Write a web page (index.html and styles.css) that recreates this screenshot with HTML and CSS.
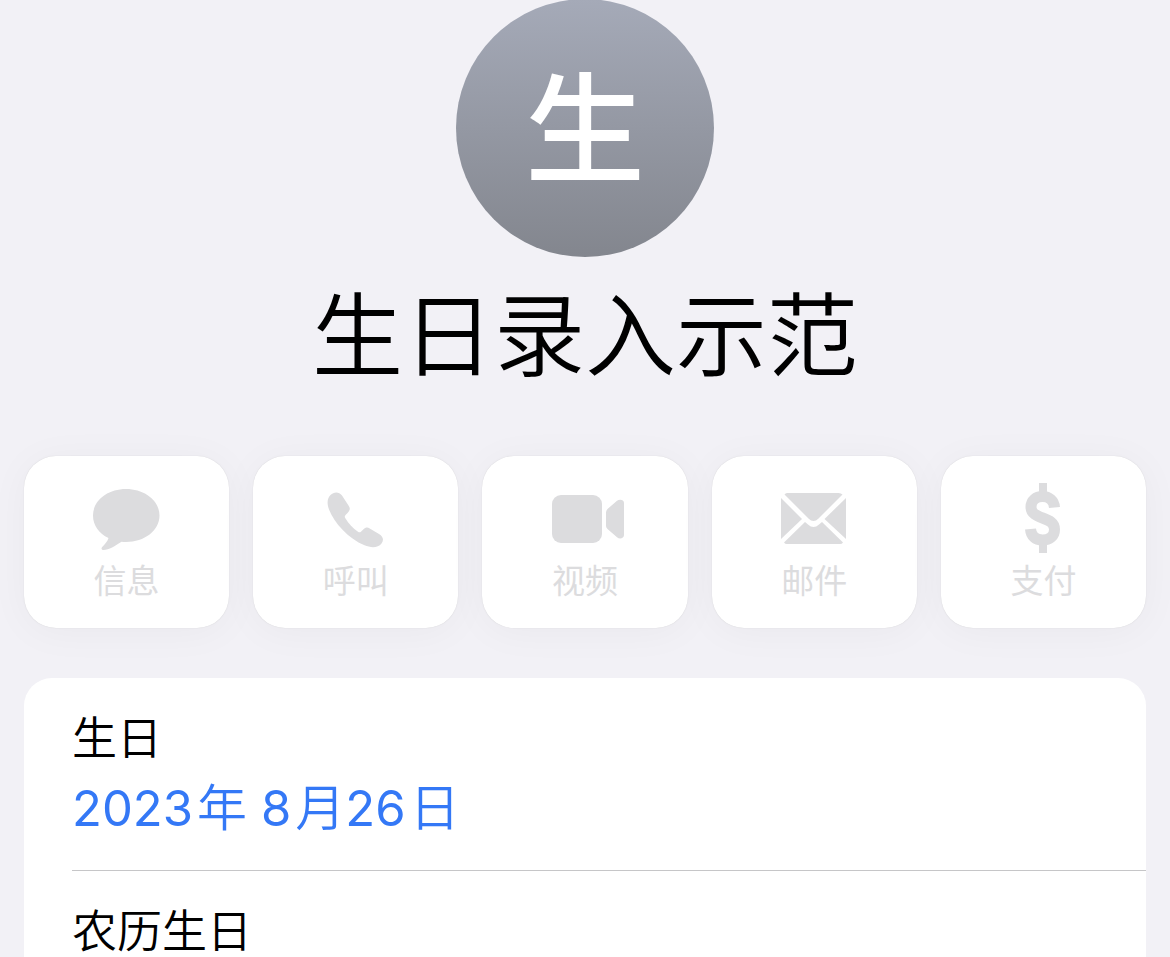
FILE: index.html
```html
<!DOCTYPE html>
<html lang="zh-CN">
<head>
    <meta charset="UTF-8">
    <meta name="viewport" content="width=device-width, initial-scale=1.0">
    <title>生日录入示范</title>
    <link rel="stylesheet" href="styles.css">
</head>
<body>
    <header class="profile">
        <div class="avatar">生</div>
        <h1>生日录入示范</h1>
    </header>

    <div class="actions">
        <button class="action" type="button" disabled>
            <svg viewBox="0 0 80 72" aria-hidden="true">
                <path d="M39 6C57.500 6 72.500 17.500 72.500 32.500S57.500 59 39 59c-1.500 0-3-.1-4.500-.3C28 63 22 67 16.500 67c-2 0-2.600-1.600-1.300-3 2-2.400 5.300-5 6.300-9C12 50.500 6 42.500 6 32.500 6 17.500 20.500 6 39 6z"/>
            </svg>
            <span>信息</span>
        </button>
        <button class="action" type="button" disabled>
            <svg viewBox="0 0 80 72" aria-hidden="true">
                <path d="M14.500 12C18 8.500 23 8.500 26 12.500L32.500 22.500C34.500 25.500 34 27 32 29.500L29.500 32C28.500 33.300 28.500 34 29.500 35.500C32.500 40.500 37 45.500 42 48.800C43.200 49.600 44 49.600 45.200 48.500L47.500 46.300C49.500 44.300 51.500 44 53.700 45.400L63 51C67.500 54 68 57 65.500 60.500C62 65 55 65 48.500 62.300C32.500 55.500 18.500 40.500 13 26.500C10.500 20 11.500 15 14.500 12z"/>
            </svg>
            <span>呼叫</span>
        </button>
        <button class="action" type="button" disabled>
            <svg viewBox="0 0 80 72" aria-hidden="true">
                <rect x="7" y="12" width="50" height="48" rx="9"/>
                <path d="M61 29.500Q61 27.500 62.500 26L72 17.800C74.500 15.800 79 16.500 79 20V52C79 55.500 74.500 56.500 72 54.300L62.500 46Q61 44.700 61 43z"/>
            </svg>
            <span>视频</span>
        </button>
        <button class="action" type="button" disabled>
            <svg viewBox="0 0 80 72" aria-hidden="true">
                <path d="M13 10H64.500Q67 10 68.500 11.500L44.500 35.500Q39.500 40.500 34.500 35.500L10.500 11.500Q11.500 10 13 10z"/>
                <path d="M7 15L28 36 7 56z"/>
                <path d="M72 15V56L50.500 36z"/>
                <path d="M31 39L34 41.500Q39.500 46.500 45 41.500L48 39 69 59.500Q68 61 66 61H13Q11 61 10 59.500z"/>
            </svg>
            <span>邮件</span>
        </button>
        <button class="action" type="button" disabled>
            <svg viewBox="0 0 80 72" aria-hidden="true">
                <path class="stroke" d="M51.500 24.500C51 17.500 46 13.500 39.500 13.500S28 17.500 28 24C28 37.500 51.500 32.500 51.500 46.500C51.500 53.500 46.500 57 39.500 57S28 53 27.500 46"/>
                <path d="M36 0h8v10h-8zM36 60h8v10h-8z"/>
            </svg>
            <span>支付</span>
        </button>
    </div>

    <dl class="card">
        <div class="row">
            <dt>生日</dt>
            <dd><a href="#"><span class="num">2023</span>年 <span class="num">8</span>月<span class="num">26</span>日</a></dd>
        </div>
        <div class="row">
            <dt>农历生日</dt>
        </div>
    </dl>
</body>
</html>
```

FILE: styles.css
```css
:root {
    --background-color: #f2f1f6;
    --card-color: #fff;
    --disabled-color: #dcdcde;
    --link-color: #3478f6;
}
* {
    box-sizing: border-box;
}
body {
    margin: 0;
    font-family: Inter, "Noto Sans CJK SC", sans-serif;
    color: #000;
    background-color: var(--background-color);
    overflow: hidden;
}
.profile {
    display: flex;
    flex-direction: column;
    align-items: center;
}
.avatar {
    width: 258px;
    height: 258px;
    margin-top: -1px;
    border-radius: 50%;
    background: linear-gradient(#a5aab8, #83868e);
    color: #fff;
    font-size: 120px;
    font-weight: 500;
    line-height: 264px;
    text-align: center;
}
h1 {
    margin: 24px 0 64px;
    font-size: 91px;
    font-weight: 350;
    line-height: 111px;
}
.actions {
    display: grid;
    grid-template-columns: repeat(5, 1fr);
    gap: 24px;
    padding: 0 24px;
}
.action {
    display: flex;
    flex-direction: column;
    align-items: center;
    gap: 2px;
    padding: 27px 0 23px;
    border: 0;
    border-radius: 32px;
    background-color: var(--card-color);
    box-shadow: 0 0 1px rgba(0,0,0,0.16), 0 4px 40px rgba(0,0,0,0.04);
    color: var(--disabled-color);
    font-family: inherit;
    font-size: 33px;
    font-weight: 400;
    line-height: 48px;
}
.action svg {
    width: 80px;
    height: 72px;
    fill: currentColor;
}
.action .stroke {
    fill: none;
    stroke: currentColor;
    stroke-width: 11;
}
.card {
    margin: 50px 24px 0;
    padding-left: 48px;
    border-radius: 28px 28px 0 0;
    background-color: var(--card-color);
}
.row {
    padding: 36px 0 26px;
}
.row + .row {
    border-top: 1px solid #c6c6c8;
}
dt {
    font-size: 45px;
    font-weight: 350;
    line-height: 50px;
}
dd {
    margin: 8px 0 0;
    font-size: 50px;
    font-weight: 350;
    line-height: 72px;
}
dd a {
    display: block;
    height: 72px;
    color: var(--link-color);
    text-decoration: none;
}
.num {
    margin-right: 4px;
    font-size: 49px;
    font-weight: 400;
}
```
